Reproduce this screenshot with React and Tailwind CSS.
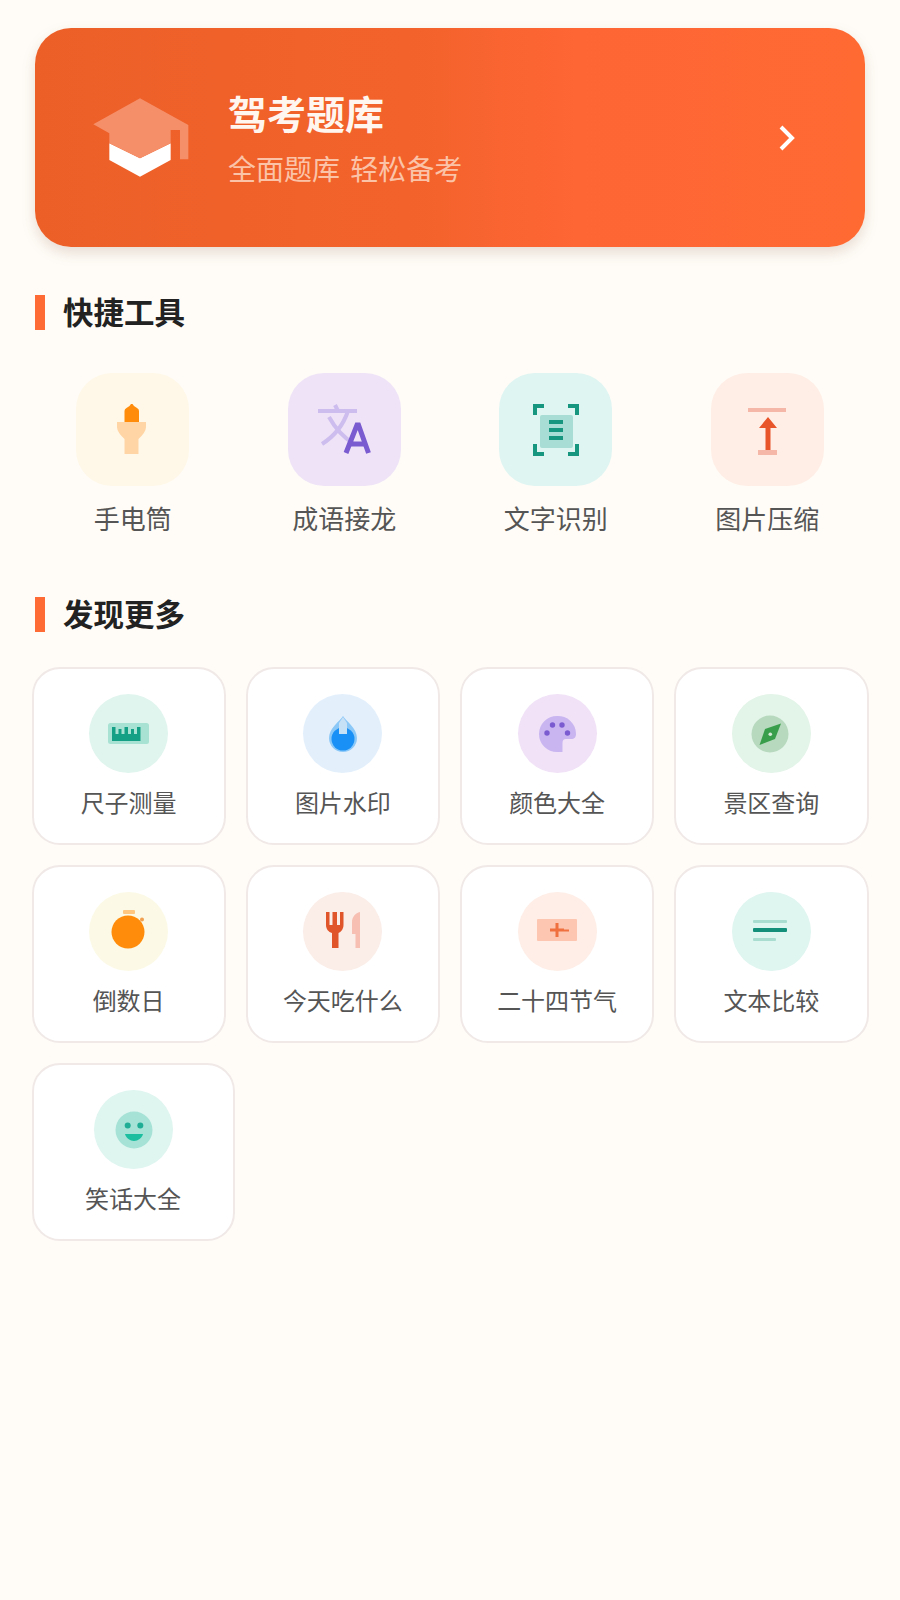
import React from "react";

const TileIcons = {
  torch: (
    <svg viewBox="0 0 113 113" className="h-full w-full">
      <path d="M48.500 49V38q0-2 2-3l3-2 1.500-2h1.500l1.500 2 3 2q2 1 2 3v11z" fill="#FF8C0A" />
      <path d="M41 49h29v5q0 5-7.500 12v15h-14V66Q41 59 41 54z" fill="#FFD5A5" />
    </svg>
  ),
  translate: (
    <svg viewBox="0 0 113 113" className="h-full w-full">
      <g stroke="#CDBDEE" strokeWidth="4" fill="none">
        <path d="M30 38h39" />
        <path d="M47 32l3 6" />
        <path d="M60 38C55 53 45 64 34 71" />
        <path d="M41 44c6 11 14 20 25 27" />
      </g>
      <g stroke="#7A5BD0" strokeWidth="5" fill="none">
        <path d="M58 80l11-28h1.500l10 28" />
        <path d="M62 71h15" />
      </g>
    </svg>
  ),
  scan: (
    <svg viewBox="0 0 113 113" className="h-full w-full">
      <path d="M36 42V33h9M69 33h9v9M36 71v10h9M69 81h9V71" stroke="#16967F" strokeWidth="4" fill="none" />
      <rect x="41" y="42" width="33" height="33" rx="2" fill="#A8DDD5" />
      <path d="M50 49h14M50 57h14M50 65h14" stroke="#16967F" strokeWidth="4" />
    </svg>
  ),
  compress: (
    <svg viewBox="0 0 113 113" className="h-full w-full">
      <rect x="37" y="35" width="38" height="4" fill="#F5B8A8" />
      <rect x="47" y="77" width="19" height="5" fill="#F5B8A8" />
      <path d="M57 44l9 11h-6.500v22h-5V55H48z" fill="#E8552A" />
    </svg>
  ),
};

const CircleIcons = {
  ruler: (
    <svg viewBox="0 0 79 79" className="h-full w-full">
      <rect x="19" y="29" width="41" height="21" rx="2.500" fill="#A8E2D2" />
      <path d="M23 33h3.500v7h3v-5h3v5h3v-7h3.500v7h3v-5h3v5h3v-7h3.500v14H23z" fill="#14A085" />
    </svg>
  ),
  drop: (
    <svg viewBox="0 0 79 79" className="h-full w-full">
      <path d="M40 22c3 5 14 12 14 22a14 14 0 0 1-28 0c0-10 11-17 14-22z" fill="#8CC8F7" />
      <circle cx="40" cy="45" r="11.500" fill="#1890F5" />
      <path d="M40 23l4 6v11h-8V29z" fill="#C6E0F6" />
    </svg>
  ),
  palette: (
    <svg viewBox="0 0 79 79" className="h-full w-full">
      <path d="M39 22a18 18 0 0 1 19 18c0 3-1.500 5-5 5h-5c-2.500 0-3.500 1.500-3.500 4v9H39a18 18 0 0 1 0-36z" fill="#C9B5F0" />
      <g fill="#7B5CD0">
        <circle cx="29" cy="39" r="2.700" />
        <circle cx="34.500" cy="31" r="2.700" />
        <circle cx="44" cy="31" r="2.700" />
        <circle cx="49.500" cy="39" r="2.700" />
      </g>
    </svg>
  ),
  compass: (
    <svg viewBox="0 0 79 79" className="h-full w-full">
      <circle cx="38" cy="40" r="18.500" fill="#B7D9BE" />
      <path d="M49 29.500L43 45 27.500 51 33 35z" fill="#399E4B" />
      <circle cx="38.300" cy="40.300" r="1.800" fill="#D5EBD8" />
    </svg>
  ),
  timer: (
    <svg viewBox="0 0 79 79" className="h-full w-full">
      <rect x="34" y="18" width="12" height="4" rx="1" fill="#FFC77F" />
      <circle cx="53" cy="27.500" r="2" fill="#F0A050" />
      <circle cx="39" cy="40" r="16.500" fill="#FF8C0A" />
    </svg>
  ),
  food: (
    <svg viewBox="0 0 79 79" className="h-full w-full">
      <path d="M23 20h3.500v13h3V20H34v13h3V20h3.500v13c0 4-2.500 7-5 8v15H29V41c-3.500-1-6-4-6-8z" fill="#E0552A" />
      <path d="M57 20v36h-4.500V42H49V30c0-5 3.500-9 8-10z" fill="#F6BFB2" />
    </svg>
  ),
  ticket: (
    <svg viewBox="0 0 79 79" className="h-full w-full">
      <rect x="19" y="27" width="40" height="22" rx="1" fill="#FCC6B0" />
      <path d="M32 38h14M39 31v14" stroke="#F07040" strokeWidth="3" />
      <path d="M46 38.500h5" stroke="#F07040" strokeWidth="2" />
    </svg>
  ),
  lines: (
    <svg viewBox="0 0 79 79" className="h-full w-full">
      <rect x="21" y="28" width="34" height="3" rx="1" fill="#A8DDD0" />
      <rect x="21" y="36" width="34" height="4" rx="1" fill="#14907A" />
      <rect x="21" y="46" width="23" height="3" rx="1" fill="#A8DDD0" />
    </svg>
  ),
  smile: (
    <svg viewBox="0 0 79 79" className="h-full w-full">
      <circle cx="40" cy="40" r="18.500" fill="#A6E2D6" />
      <circle cx="33.700" cy="35.500" r="3" fill="#1FAE95" />
      <circle cx="46.300" cy="35.500" r="3" fill="#1FAE95" />
      <path d="M31 44h18c-1 4-5 7-9 7s-8-3-9-7z" fill="#1BBFA0" />
    </svg>
  ),
};

const tools = [
  { label: "手电筒", bg: "bg-[#FFF8E8]", icon: TileIcons.torch },
  { label: "成语接龙", bg: "bg-[#EFE4F7]", icon: TileIcons.translate },
  { label: "文字识别", bg: "bg-[#DFF5F2]", icon: TileIcons.scan },
  { label: "图片压缩", bg: "bg-[#FFEEE6]", icon: TileIcons.compress },
];

const more = [
  { label: "尺子测量", bg: "bg-[#E0F5EE]", icon: CircleIcons.ruler },
  { label: "图片水印", bg: "bg-[#E3F0FC]", icon: CircleIcons.drop },
  { label: "颜色大全", bg: "bg-[#F1E2F7]", icon: CircleIcons.palette },
  { label: "景区查询", bg: "bg-[#E3F4E8]", icon: CircleIcons.compass },
  { label: "倒数日", bg: "bg-[#FCFAE6]", icon: CircleIcons.timer },
  { label: "今天吃什么", bg: "bg-[#FBEDE8]", icon: CircleIcons.food },
  { label: "二十四节气", bg: "bg-[#FEEEE7]", icon: CircleIcons.ticket },
  { label: "文本比较", bg: "bg-[#DFF5F0]", icon: CircleIcons.lines },
  { label: "笑话大全", bg: "bg-[#DFF5F0]", icon: CircleIcons.smile, wide: true },
];

function Heading({ children, className }) {
  return (
    <div className={"flex h-[35px] items-start gap-[18px] pl-[35px] " + className}>
      <div className="h-[35px] w-[10px] bg-[#FF6B35]" />
      <h2 className="text-[30.500px] leading-[32px] font-bold text-[#222222]">{children}</h2>
    </div>
  );
}

export default function App() {
  return (
    <div className="min-h-[1600px] w-[900px] overflow-hidden bg-[#FFFCF7] pt-[28px] font-['Noto_Sans_CJK_SC','Noto_Sans',sans-serif]">
      <div className="mx-[35px] flex h-[219px] items-center rounded-[36px] bg-[linear-gradient(90deg,#EC6028,#F3622B_45%,#FE6634_65%,#FF6A33)] pr-[70px] pl-[45px] shadow-[0_6px_14px_rgba(120,80,50,0.18)]">
        <svg viewBox="0 0 390 330" className="mb-[5px] h-[110px] w-[130px] shrink-0">
          <path d="M88 190L180 235 272 190V240L180 290 88 240z" fill="#FFFFFF" />
          <path d="M180 55L325 135V238H300V150L272 150V190L180 235 88 190V160L40 133z" fill="#F58F6A" />
        </svg>
        <div className="ml-[18px] flex flex-col">
          <div className="mb-[1px] text-[39px] leading-[46px] font-bold text-[#FFF6F0]">驾考题库</div>
          <div className="mt-[14px] text-[28px] leading-[36px] [word-spacing:4px] text-[#FBC4A8]">全面题库 轻松备考</div>
        </div>
        <svg viewBox="0 0 16 26" className="ml-auto h-[26px] w-[16px]" fill="none" stroke="#FFFFFF" strokeWidth="4">
          <path d="M2 2l11 11L2 24" />
        </svg>
      </div>

      <Heading className="mt-[48px]">快捷工具</Heading>

      <div className="mt-[43px] grid grid-cols-4 px-[27px]">
        {tools.map((t) => (
          <div key={t.label} className="flex flex-col items-center">
            <div className={"h-[113px] w-[113px] rounded-[36px] " + t.bg}>{t.icon}</div>
            <div className="mt-[14px] text-[26px] leading-[36px] text-[#555555]">{t.label}</div>
          </div>
        ))}
      </div>

      <Heading className="mt-[61px]">发现更多</Heading>

      <div className="mt-[35px] flex flex-wrap gap-x-[20px] gap-y-[20px] px-[31.500px]">
        {more.map((m) => (
          <div
            key={m.label}
            className={
              "flex h-[178px] flex-col items-center rounded-[28px] border-2 border-[#F0E9E8] bg-white pt-[25px] " +
              (m.wide ? "w-[203px]" : "w-[194.250px]")
            }
          >
            <div className={"h-[79px] w-[79px] rounded-full " + m.bg}>{m.icon}</div>
            <div className="mt-[13px] text-[24px] leading-[32px] text-[#555555]">{m.label}</div>
          </div>
        ))}
      </div>
    </div>
  );
}
